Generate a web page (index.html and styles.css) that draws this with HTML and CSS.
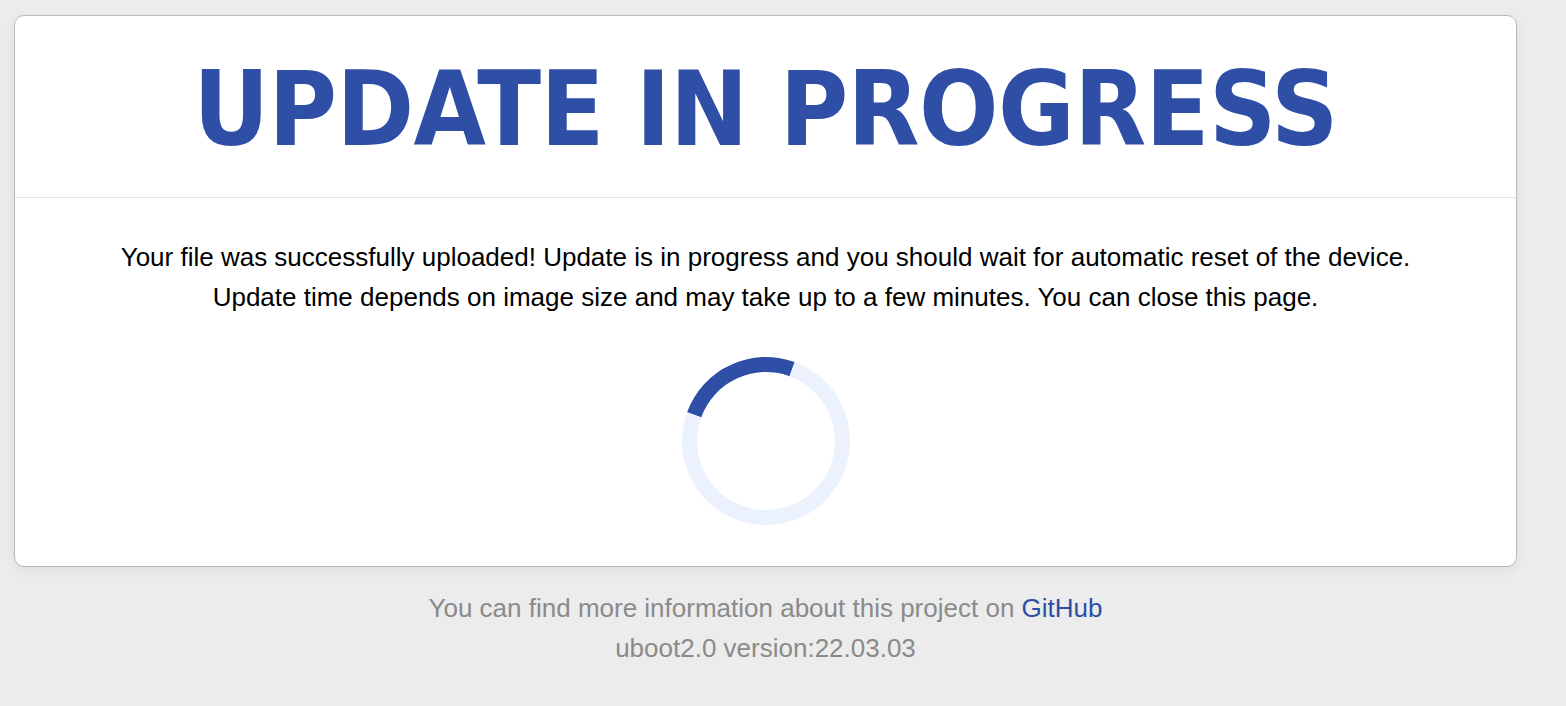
FILE: index.html
```html
<!DOCTYPE html>
<html>
<head>
<meta charset="utf-8">
<title>Update in progress</title>
<link rel="stylesheet" href="styles.css">
</head>
<body>
<div class="page">
  <div class="card">
    <div class="card-header">
      <h1 class="title">UPDATE IN PROGRESS</h1>
    </div>
    <div class="card-body">
      <p class="message">Your file was successfully uploaded! Update is in progress and you should wait for automatic reset of the device.<br>Update time depends on image size and may take up to a few minutes. You can close this page.</p>
      <div class="spinner"></div>
    </div>
  </div>
  <div class="footer">
    <p>You can find more information about this project on <a href="#">GitHub</a></p>
    <p>uboot2.0 version:22.03.03</p>
  </div>
</div>
</body>
</html>
```
FILE: styles.css
```css
html, body {
  margin: 0;
  padding: 0;
  background: #ececec;
  font-family: "Liberation Sans", Arial, sans-serif;
}
.page {
  width: 1503px;
  margin: 15px 0 0 14px;
}
.card {
  background: #fff;
  border: 1px solid #b9b9b9;
  border-radius: 10px;
  box-shadow: 0 4px 12px rgba(0,0,0,0.06);
  height: 552px;
  box-sizing: border-box;
}
.card-header {
  height: 182px;
  box-sizing: border-box;
  padding-top: 4px;
  border-bottom: 1px solid #e3e3e3;
  display: flex;
  align-items: center;
  justify-content: center;
}
.title {
  margin: 0;
  font-family: "DejaVu Sans Condensed", "DejaVu Sans", Verdana, sans-serif;
  font-stretch: semi-condensed;
  font-weight: bold;
  font-size: 104px;
  letter-spacing: -0.6px;
  color: #2e4fa5;
  line-height: 1;
}
.card-body {
  display: flex;
  flex-direction: column;
  align-items: center;
  padding-top: 39px;
}
.message {
  margin: 0;
  font-size: 26px;
  line-height: 40px;
  text-align: center;
  color: #000;
}
.spinner {
  margin-top: 40px;
  width: 168px;
  height: 168px;
  box-sizing: border-box;
  border-radius: 50%;
  border: 15px solid #ebf1fd;
  border-top-color: #2e4fa5;
  transform: rotate(-25deg);
}
.footer {
  text-align: center;
  color: #8a8a8a;
  font-size: 26px;
  line-height: 40px;
  padding-top: 21px;
}
.footer p {
  margin: 0;
}
.footer a {
  color: #2e4fa5;
  text-decoration: none;
}
```
